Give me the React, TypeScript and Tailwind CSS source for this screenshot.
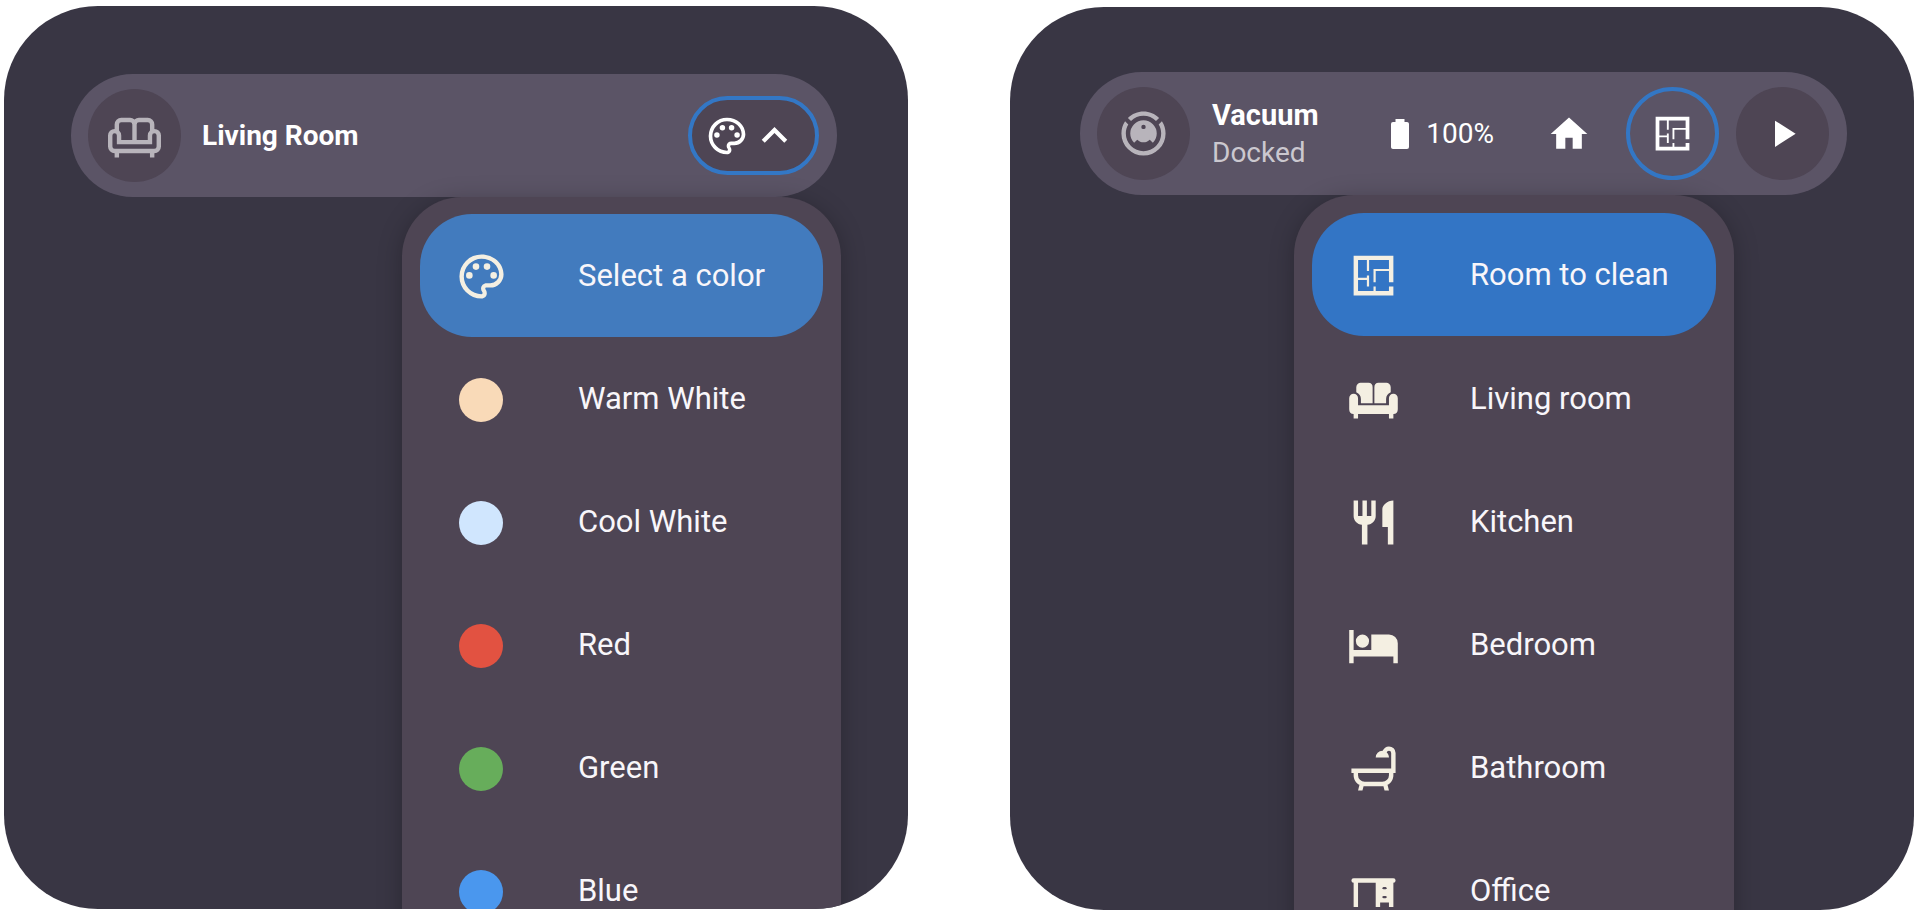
import type { ReactNode } from "react";

const paths = {
  sofaOutline:
    "M21,9V7A3,3 0 0,0 18,4H14A3,3 0 0,0 12,4.78A3,3 0 0,0 10,4H6A3,3 0 0,0 3,7V9A3,3 0 0,0 0,12V17A3,3 0 0,0 3,20V22H5V20H19V22H21V20A3,3 0 0,0 24,17V12A3,3 0 0,0 21,9M14,6H18A1,1 0 0,1 19,7V9.78A3,3 0 0,0 18,12V14H13V7A1,1 0 0,1 14,6M5,7A1,1 0 0,1 6,6H10A1,1 0 0,1 11,7V14H6V12A3,3 0 0,0 5,9.78V7M22,17A1,1 0 0,1 21,18H3A1,1 0 0,1 2,17V12A1,1 0 0,1 4,12V16H20V12A1,1 0 0,1 22,12V17Z",
  palette:
    "M12,22A10,10 0 0,1 2,12A10,10 0 0,1 12,2C17.5,2 22,6 22,11A6,6 0 0,1 16,17H14.2C13.9,17 13.7,17.2 13.7,17.5C13.7,17.6 13.8,17.7 13.8,17.8C14.2,18.3 14.4,18.9 14.4,19.5C14.5,20.9 13.4,22 12,22M12,4A8,8 0 0,0 4,12A8,8 0 0,0 12,20C12.3,20 12.5,19.8 12.5,19.5C12.5,19.3 12.4,19.2 12.4,19.1C12,18.6 11.8,18.1 11.8,17.5C11.8,16.1 12.9,15 14.3,15H16A4,4 0 0,0 20,11C20,7.1 16.4,4 12,4M6.5,10A1.5,1.5 0 0,1 6.5,13A1.5,1.5 0 0,1 6.5,10M9.5,6A1.5,1.5 0 0,1 9.5,9A1.5,1.5 0 0,1 9.5,6M14.5,6A1.5,1.5 0 0,1 14.5,9A1.5,1.5 0 0,1 14.5,6M17.5,10A1.5,1.5 0 0,1 17.5,13A1.5,1.5 0 0,1 17.5,10Z",
  chevronUp: "M7.41,15.41L12,10.83L16.59,15.41L18,14L12,8L6,14L7.41,15.41Z",
  vacuum:
    "M12,2C14.65,2 17.19,3.06 19.07,4.93L17.65,6.35C16.15,4.85 14.12,4 12,4C9.88,4 7.84,4.84 6.35,6.35L4.93,4.93C6.81,3.06 9.35,2 12,2M3.66,6.5L5.11,7.94C4.39,9.17 4,10.57 4,12A8,8 0 0,0 12,20A8,8 0 0,0 20,12C20,10.57 19.61,9.17 18.88,7.94L20.34,6.5C21.42,8.12 22,10.04 22,12A10,10 0 0,1 12,22A10,10 0 0,1 2,12C2,10.04 2.58,8.12 3.66,6.5M12,6A6,6 0 0,1 18,12C18,13.59 17.37,15.12 16.24,16.24L14.83,14.83C14.08,15.58 13.06,16 12,16C10.94,16 9.92,15.58 9.17,14.83L7.76,16.24C6.63,15.12 6,13.59 6,12A6,6 0 0,1 12,6M12,8A1,1 0 0,0 11,9A1,1 0 0,0 12,10A1,1 0 0,0 13,9A1,1 0 0,0 12,8Z",
  battery:
    "M16.67,4H15V2H9V4H7.33A1.33,1.33 0 0,0 6,5.33V20.67C6,21.4 6.6,22 7.33,22H16.67A1.33,1.33 0 0,0 18,20.67V5.33C18,4.6 17.4,4 16.67,4Z",
  home: "M10,20V14H14V20H19V12H22L12,3L2,12H5V20H10Z",
  floorPlan:
    "M10 5V10H9V5H5V13H9V12H10V17H9V14H5V19H12V17H13V19H19V17H21V21H3V3H21V15H19V10H13V15H12V9H19V5H10Z",
  play: "M8,5.14V19.14L19,12.14L8,5.14Z",
  sofa: "M6.3,4.4H9.7A2,2 0 0,1 11.6,6.4V13.7H6.3V11.8A3.4,3.4 0 0,0 4.2,8.7V6.4A2,2 0 0,1 6.3,4.4M14.3,4.4H17.7A2,2 0 0,1 19.8,6.4V8.7A3.4,3.4 0 0,0 17.7,11.8V13.7H12.4V6.4A2,2 0 0,1 14.3,4.4M1,11.4A2,2 0 0,1 5,11.4V14.6H19V11.4A2,2 0 0,1 23,11.4V16.4A2.2,2.2 0 0,1 21,18.6V20.6H19V18.6H5V20.6H3V18.6A2.2,2.2 0 0,1 1,16.4Z",
  cutlery:
    "M11,9H9V2H7V9H5V2H3V9C3,11.12 4.66,12.84 6.75,12.97V22H9.25V12.97C11.34,12.84 13,11.12 13,9V2H11V9M16,6V14H18.5V22H21V2C18.24,2 16,4.24 16,6Z",
  bed: "M19,7H11V14H3V5H1V20H3V17H21V20H23V11A4,4 0 0,0 19,7M7,13A3,3 0 0,0 10,10A3,3 0 0,0 7,7A3,3 0 0,0 4,10A3,3 0 0,0 7,13Z",
  bath: "M21,14V15C21,16.91 19.93,18.57 18.35,19.41L19,22H17L16.5,20C16.33,20 16.17,20 16,20H8C7.83,20 7.67,20 7.5,20L7,22H5L5.65,19.41C4.07,18.57 3,16.91 3,15V14H2V12H20V5A1,1 0 0,0 19,4C18.5,4 18.12,4.34 18,4.79C18.63,5.33 19,6.13 19,7H13A3,3 0 0,1 16,4C16.06,4 16.11,4 16.17,4C16.58,2.84 17.69,2 19,2A3,3 0 0,1 22,5V14H21M19,14H5V15A3,3 0 0,0 8,18H16A3,3 0 0,0 19,15V14Z",
  desk: "M3,6A1,1 0 0,0 3,8V19H5V8H13V19H15V17H19V19H21V8A1,1 0 0,0 21,6H3M16.5,10H17.5L18.2,10.5L17.5,11H16.5L15.8,10.5L16.5,10M16.5,14H17.5L18.2,14.5L17.5,15H16.5L15.8,14.5L16.5,14Z",
};

function Icon({ name, className }: { name: keyof typeof paths; className: string }) {
  return (
    <svg viewBox="0 0 24 24" fill="currentColor" fillRule="evenodd" aria-hidden="true" className={`shrink-0 ${className}`}>
      <path d={paths[name]} />
    </svg>
  );
}

function Card({ className, children }: { className: string; children: ReactNode }) {
  return (
    <section className={`flex aspect-[904/903] min-w-0 flex-1 flex-col overflow-hidden rounded-[94px] bg-[#393644] ${className}`}>
      {children}
    </section>
  );
}

function Bar({ className, children }: { className: string; children: ReactNode }) {
  return (
    <header className={`flex h-[123px] shrink-0 items-center rounded-full bg-[#5b5466] pr-[18px] pl-[17px] ${className}`}>
      {children}
    </header>
  );
}

function Menu({ label, className, children }: { label: string; className: string; children: ReactNode }) {
  return (
    <ul
      aria-label={label}
      className={`flex flex-1 flex-col self-end rounded-t-[60px] bg-[#4e4554] px-[18px] shadow-[0_4px_24px_rgba(0,0,0,0.25)] ${className}`}
    >
      {children}
    </ul>
  );
}

function Item({ label, className = "", children }: { label: string; className?: string; children: ReactNode }) {
  return (
    <li className="shrink-0">
      <button
        type="button"
        className={`flex h-[123px] w-full items-center gap-[70px] rounded-[52px] pl-[34px] text-left text-[31px] leading-[32px] text-[#f8f6fa] ${className}`}
      >
        <span className="flex w-[54px] shrink-0 justify-center pt-0.5 text-[#f4efe2]">{children}</span>
        <span className="whitespace-nowrap">{label}</span>
      </button>
    </li>
  );
}

const colors = [
  { label: "Warm White", swatch: "bg-[#f9dab8]" },
  { label: "Cool White", swatch: "bg-[#d0e6fe]" },
  { label: "Red", swatch: "bg-[#e25241]" },
  { label: "Green", swatch: "bg-[#67ad5b]" },
  { label: "Blue", swatch: "bg-[#4a97ee]" },
];

const rooms: { label: string; icon: keyof typeof paths }[] = [
  { label: "Living room", icon: "sofa" },
  { label: "Kitchen", icon: "cutlery" },
  { label: "Bedroom", icon: "bed" },
  { label: "Bathroom", icon: "bath" },
  { label: "Office", icon: "desk" },
];

export default function App() {
  return (
    <main className="flex items-start gap-[102px] bg-white pt-1.5 pr-1.5 pl-1 font-['Roboto',sans-serif] text-white">
      <Card className="">
        <Bar className="mt-[68px] mr-[71px] ml-[67px]">
          <span className="flex size-[93px] shrink-0 items-center justify-center rounded-full bg-[#4e4554] text-[#b8b4bb]">
            <Icon name="sofaOutline" className="size-[53px]" />
          </span>
          <h2 className="ml-[21px] text-[28px] font-bold whitespace-nowrap">Living Room</h2>
          <button
            type="button"
            aria-label="Select a color"
            aria-expanded="true"
            className="ml-auto flex h-[79px] items-center rounded-full border-4 border-[#3377c5] bg-[#4e4554] pr-[15px] pl-[13px]"
          >
            <Icon name="palette" className="size-[44px]" />
            <Icon name="chevronUp" className="size-[51px]" />
          </button>
        </Bar>
        <Menu label="Colors" className="mr-[67px] w-[439px] pt-[17px]">
          <Item label="Select a color" className="bg-[#427bbe]">
            <Icon name="palette" className="size-[53px]" />
          </Item>
          {colors.map((c) => (
            <Item key={c.label} label={c.label}>
              <span className="flex size-[53px] items-center justify-center">
                <span className={`size-[44px] rounded-full ${c.swatch}`} />
              </span>
            </Item>
          ))}
        </Menu>
      </Card>

      <Card className="mt-px">
        <Bar className="mt-[65px] mr-[67px] ml-[70px]">
          <span className="flex size-[93px] shrink-0 items-center justify-center rounded-full bg-[#4e4554] text-[#b8b4bb]">
            <Icon name="vacuum" className="size-[53px]" />
          </span>
          <div className="ml-[22px] leading-[38px] whitespace-nowrap">
            <h2 className="text-[29px] font-bold">Vacuum</h2>
            <p className="text-[28px] text-[#cbc8cf]">Docked</p>
          </div>
          <div className="ml-auto flex items-center">
            <Icon name="battery" className="size-[36px]" />
            <span className="ml-2 text-[28px]">100%</span>
          </div>
          <button type="button" aria-label="Return to dock" className="ml-[53px]">
            <Icon name="home" className="size-[44px]" />
          </button>
          <button
            type="button"
            aria-label="Room to clean"
            aria-expanded="true"
            className="ml-[35px] flex size-[93px] shrink-0 items-center justify-center rounded-full border-4 border-[#3377c5]"
          >
            <Icon name="floorPlan" className="size-[45px]" />
          </button>
          <button
            type="button"
            aria-label="Start cleaning"
            className="ml-[17px] flex size-[93px] shrink-0 items-center justify-center rounded-full bg-[#4e4554]"
          >
            <Icon name="play" className="size-[45px]" />
          </button>
        </Bar>
        <Menu label="Rooms" className="mr-[180px] w-[440px] pt-[18px]">
          <Item label="Room to clean" className="mb-px bg-[#3375c5]">
            <Icon name="floorPlan" className="size-[53px]" />
          </Item>
          {rooms.map((r) => (
            <Item key={r.label} label={r.label}>
              <Icon name={r.icon} className="size-[53px]" />
            </Item>
          ))}
        </Menu>
      </Card>
    </main>
  );
}
